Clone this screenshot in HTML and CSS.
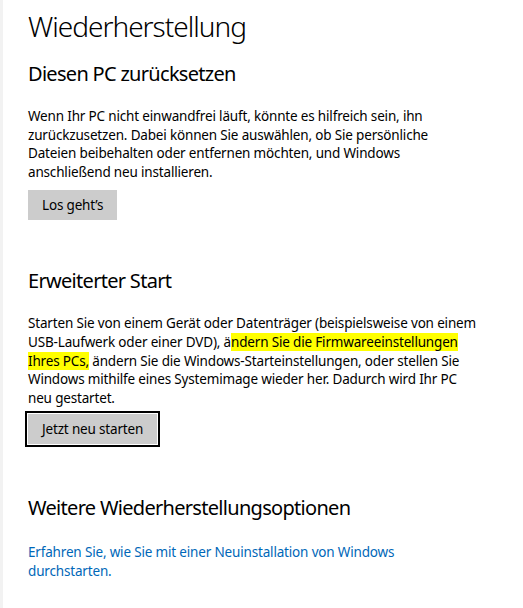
FILE: index.html
```html
<!DOCTYPE html>
<html lang="de">
<head>
    <meta charset="UTF-8">
    <meta name="viewport" content="width=device-width, initial-scale=1.0">
    <title>Wiederherstellung</title>
    <link rel="stylesheet" href="styles.css">
</head>
<body>
    <div class="page">
        <h1>Wiederherstellung</h1>

        <section class="group">
            <h2>Diesen PC zurücksetzen</h2>
            <p>Wenn Ihr PC nicht einwandfrei läuft, könnte es hilfreich sein, ihn zurückzusetzen. Dabei können Sie auswählen, ob Sie persönliche Dateien beibehalten oder entfernen möchten, und Windows anschließend neu installieren.</p>
            <button class="btn">Los geht’s</button>
        </section>

        <section class="group">
            <h2>Erweiterter Start</h2>
            <p>Starten Sie von einem Gerät oder Datenträger (beispielsweise von einem USB-Laufwerk oder einer DVD), ä<span class="mark">ndern Sie die Firmwareeinstellungen Ihres PCs,</span> ändern Sie die Windows-Starteinstellungen, oder stellen Sie Windows mithilfe eines Systemimage wieder her. Dadurch wird Ihr PC neu gestartet.</p>
            <button class="btn btn-focus">Jetzt neu starten</button>
        </section>

        <section class="group">
            <h2>Weitere Wiederherstellungsoptionen</h2>
            <p class="more"><a href="#" class="link">Erfahren Sie, wie Sie mit einer Neuinstallation von Windows durchstarten.</a></p>
        </section>
    </div>
</body>
</html>
```

FILE: styles.css
```css
body {
    margin: 0;
    background: #fff;
    color: #000;
    font-family: "Noto Sans", "Open Sans", sans-serif;
}
.page {
    min-height: 608px;
    box-sizing: border-box;
    border-left: 3px solid #f2f2f2;
    padding: 8px 20px 0 25px;
}
h1 {
    margin: 0;
    font-size: 28px;
    font-weight: 300;
    line-height: 36px;
    letter-spacing: -1px;
}
h2 {
    margin: 0;
    font-size: 20px;
    font-weight: 400;
    line-height: 28px;
    letter-spacing: -0.7px;
}
.group {
    margin-top: 16px;
}
.group + .group {
    margin-top: 47px;
}
.group:last-child {
    margin-top: 50px;
}
p {
    margin: 19px 0 0;
    max-width: 449px;
    font-size: 13.5px;
    line-height: 18.6px;
    letter-spacing: -0.17px;
}
p.more {
    margin-top: 21px;
}
.btn {
    display: block;
    margin-top: 9px;
    height: 30px;
    padding: 0 14px;
    border: none;
    background-color: #cccccc;
    color: #000;
    font-family: inherit;
    font-size: 13.5px;
    letter-spacing: -0.17px;
}
.btn-focus {
    margin-top: 7px;
    outline: 2px solid #000;
    outline-offset: 1px;
}
.mark {
    background-color: #ffff00;
}
.link {
    color: #0067b8;
    text-decoration: none;
}
```
